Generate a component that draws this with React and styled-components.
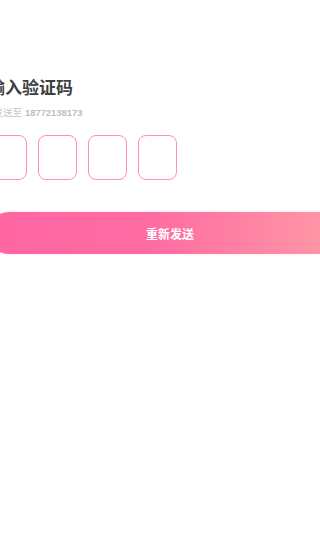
import styled, { createGlobalStyle } from "styled-components";

const GlobalStyle = createGlobalStyle`
  html, body {
    margin: 0;
    padding: 0;
    background: #fff;
    overflow: hidden;
  }
  body {
    font-family: "Noto Sans CJK SC", "Noto Sans", sans-serif;
  }
`

const Page = styled.div`
  width: 320px;
  height: 559px;
  overflow: hidden;
  background: #fff;
`
const Content = styled.div`
  margin-left: -12px;
  width: 364px;
  padding-top: 78px;
`
const Title = styled.div`
  font-size: 17px;
  line-height: 18px;
  font-weight: 700;
  color: #404040;
`
const Tip = styled.div`
  margin-top: 9px;
  font-size: 9.5px;
  line-height: 14px;
  color: #c6c6cb;
  text-indent: -4px;
  white-space: nowrap;
  span {
    margin-left: 3px;
    font-family: "Liberation Sans", Arial, sans-serif;
    font-weight: 700;
    font-size: 9.4px;
    color: #bdbdc4;
  }
`
const Boxes = styled.div`
  display: flex;
  gap: 11px;
  margin-top: 15px;
`
const CodeBox = styled.div`
  box-sizing: border-box;
  width: 39px;
  height: 45px;
  border: 1px solid #ff8dbd;
  border-radius: 8px;
`
const Button = styled.button`
  display: block;
  width: 364px;
  height: 42px;
  margin-top: 32px;
  border: none;
  border-radius: 21px;
  background: linear-gradient(90deg, #ff66a3 0%, #ff6ca2 45%, #ff9ca6 100%);
  box-shadow: 0 0 3px rgba(255, 120, 170, 0.25);
  color: #fff;
  font-family: "Noto Sans CJK SC", sans-serif;
  font-size: 12px;
  font-weight: 700;
  padding: 0;
`

const App = () => {
  return (
    <Page>
      <GlobalStyle />
      <Content>
        <Title>输入验证码</Title>
        <Tip>已发送至<span>18772138173</span></Tip>
        <Boxes>
          {[0, 1, 2, 3].map((i) => <CodeBox key={i} />)}
        </Boxes>
        <Button>重新发送</Button>
      </Content>
    </Page>
  );
}

export default App;
